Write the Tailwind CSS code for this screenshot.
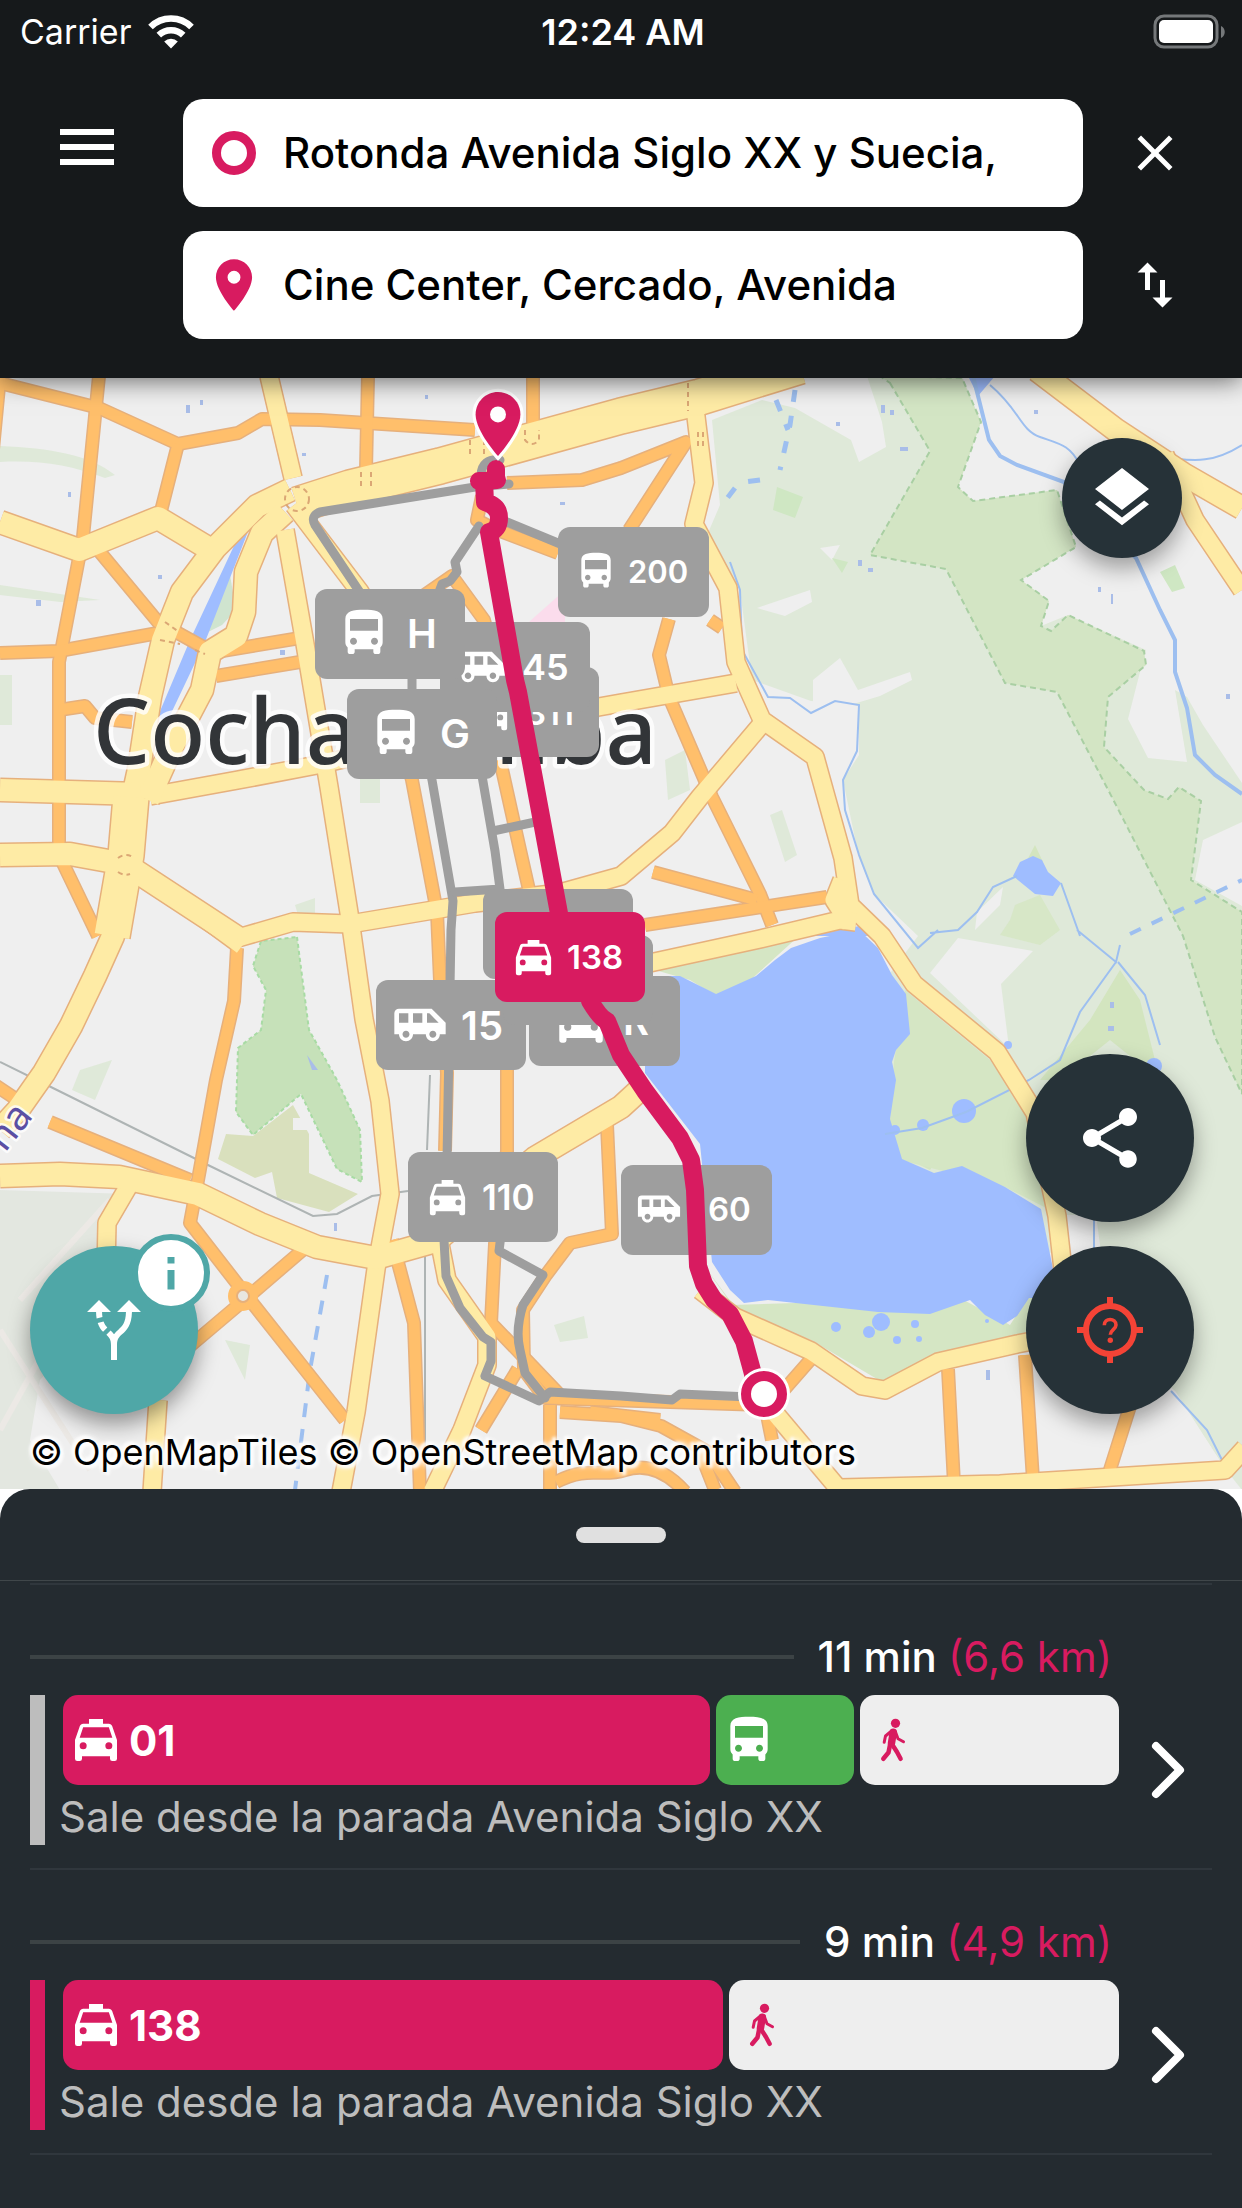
<!DOCTYPE html>
<html lang="es">
<head>
<meta charset="utf-8">
<meta name="viewport" content="width=device-width, initial-scale=1">
<title>Rutas</title>
<script src="https://cdn.jsdelivr.net/npm/@tailwindcss/browser@4"></script>
</head>
<body class="flex min-h-screen flex-col bg-white font-['Inter',sans-serif]">

<!-- Shared icons -->
<svg class="hidden" aria-hidden="true">
  <symbol id="bus" viewBox="0 0 24 24"><path d="M4 16c0 .88.39 1.67 1 2.22V20c0 .55.45 1 1 1h1c.55 0 1-.45 1-1v-1h8v1c0 .55.45 1 1 1h1c.55 0 1-.45 1-1v-1.78c.61-.55 1-1.34 1-2.22V6c0-3.5-3.58-4-8-4s-8 .5-8 4v10zm3.5 1c-.83 0-1.5-.67-1.5-1.5S6.670 14 7.500 14s1.500.67 1.500 1.500S8.330 17 7.500 17zm9 0c-.83 0-1.500-.67-1.500-1.500s.67-1.500 1.500-1.500 1.500.67 1.500 1.500-.67 1.500-1.500 1.500zm1.500-6H6V6h12v5z"/></symbol>
  <symbol id="taxi" viewBox="0 0 24 24"><path d="M5,11L6.5,6.5H17.5L19,11M17.5,16A1.5,1.5 0 0,1 16,14.5A1.5,1.5 0 0,1 17.5,13A1.5,1.5 0 0,1 19,14.5A1.5,1.5 0 0,1 17.5,16M6.5,16A1.5,1.5 0 0,1 5,14.5A1.5,1.5 0 0,1 6.5,13A1.5,1.5 0 0,1 8,14.5A1.5,1.5 0 0,1 6.5,16M18.92,6C18.72,5.42 18.16,5 17.5,5H15V3H9V5H6.5C5.84,5 5.28,5.42 5.08,6L3,12V20A1,1 0 0,0 4,21H5A1,1 0 0,0 6,20V19H18V20A1,1 0 0,0 19,21H20A1,1 0 0,0 21,20V12L18.92,6Z"/></symbol>
  <symbol id="van" viewBox="0 0 24 24"><path d="M17 5H3a2 2 0 00-2 2v9h2c0 1.650 1.340 3 3 3s3-1.350 3-3h5.500c0 1.650 1.340 3 3 3s3-1.350 3-3H23v-5l-6-6zM3 11V7h4v4H3zm3 6.500c-.83 0-1.500-.67-1.500-1.500s.67-1.500 1.500-1.500 1.500.67 1.500 1.500-.67 1.500-1.500 1.500zm7-6.500H9V7h4v4zm4.500 6.500c-.83 0-1.500-.67-1.500-1.500s.67-1.500 1.500-1.500 1.500.67 1.500 1.500-.67 1.500-1.500 1.500zM15 11V7h1l4 4h-5z"/></symbol>
  <symbol id="pin" viewBox="0 0 24 24"><path d="M12 2C8.130 2 5 5.130 5 9c0 5.250 7 13 7 13s7-7.750 7-13c0-3.870-3.130-7-7-7zm0 9.500a2.500 2.500 0 010-5 2.500 2.500 0 010 5z"/></symbol>
  <symbol id="walk" viewBox="0 0 56 56">
    <circle cx="30.500" cy="11.300" r="4.600"/>
    <g fill="none" stroke="currentColor" stroke-width="4.500" stroke-linecap="round" stroke-linejoin="round">
      <path d="M26.500 19 20.500 24l-1.300 6.300" stroke-width="3"/>
      <path d="M30.500 20 33 26.800l5.500 3" stroke-width="3"/>
      <path d="M28.300 20.200 26.500 31" stroke-width="7.500"/>
      <path d="M25.300 31.500 23.500 40.500 18.300 46.800"/>
      <path d="M27.500 33 32 40l3.600 6.800"/>
    </g>
  </symbol>
</svg>

<header class="relative z-10 bg-[#16191b] pb-[39px] text-white shadow-[0_2px_24px_rgba(0,0,0,0.6)]">
  <div class="grid h-[63px] grid-cols-3 items-center pr-4 pl-5 text-[34px] leading-none">
    <div class="flex items-center gap-4">
      <span>Carrier</span>
      <svg class="h-9 w-12" viewBox="0 0 48 36" fill="none" stroke="#fff" stroke-width="6.500" aria-label="Wi-Fi">
        <path d="M3.500 13a29 29 0 0 1 41 0"/><path d="M11.800 21.200a17.500 17.500 0 0 1 24.400 0"/><path d="M24 34.500l-6.800-6.900a9.700 9.700 0 0 1 13.600 0z" fill="#fff" stroke="none"/>
      </svg>
    </div>
    <span class="text-center text-[36px] font-semibold">12:24 AM</span>
    <svg class="h-9 w-[73px] justify-self-end" viewBox="0 0 73 36" aria-label="Batería">
      <rect x="2" y="2" width="62" height="31" rx="9" fill="none" stroke="#75787a" stroke-width="3"/>
      <rect x="6" y="6" width="54" height="23" rx="5" fill="#fff"/>
      <path d="M68 12c5 2 5 10 0 12z" fill="#75787a"/>
    </svg>
  </div>
  <form class="grid grid-cols-[183px_1fr_159px] items-center gap-y-6 pt-9">
    <button type="button" aria-label="Menú" class="mb-3 ml-[51px] size-[72px]">
      <svg viewBox="0 0 24 24" fill="#fff"><path d="M3 18h18v-2H3v2zm0-5h18v-2H3v2zm0-7v2h18V6H3z"/></svg>
    </button>
    <label class="flex h-[108px] items-center gap-[18px] rounded-[20px] bg-white pl-5">
      <svg class="size-[62px] shrink-0" viewBox="0 0 62 62" fill="none" stroke="#d81b60" stroke-width="9"><circle cx="31" cy="31" r="17.500"/></svg>
      <input type="text" aria-label="Origen" value="Rotonda Avenida Siglo XX y Suecia," class="min-w-0 flex-1 bg-transparent pb-0.5 text-[42px] font-medium text-black outline-none">
    </label>
    <button type="button" aria-label="Cerrar" class="ml-[42px] size-[60px]">
      <svg viewBox="0 0 24 24" fill="#fff"><path d="M19 6.410L17.590 5 12 10.590 6.410 5 5 6.410 10.590 12 5 17.590 6.410 19 12 13.410 17.590 19 19 17.590 13.410 12z"/></svg>
    </button>
    <label class="col-start-2 flex h-[108px] items-center gap-[18px] rounded-[20px] bg-white pl-5">
      <svg class="size-[62px] shrink-0" fill="#d81b60"><use href="#pin"/></svg>
      <input type="text" aria-label="Destino" value="Cine Center, Cercado, Avenida" class="min-w-0 flex-1 bg-transparent pb-0.5 text-[42px] font-medium text-black outline-none">
    </label>
    <button type="button" aria-label="Intercambiar" class="ml-[42px] size-[60px]">
      <svg viewBox="0 0 24 24" fill="#fff"><path d="M16 17.010V10h-2v7.010h-3L15 21l4-3.990h-3zM9 3L5 6.990h3V14h2V6.990h3L9 3z"/></svg>
    </button>
  </form>
</header>

<main class="relative min-h-[900px] flex-1 overflow-hidden bg-[#efefef]">
  <svg class="absolute inset-0 size-full" viewBox="0 378 1242 1111" preserveAspectRatio="xMidYMid slice" role="img" aria-label="Mapa de Cochabamba">
    <defs>
      <g id="y-wide">
        <path d="M297 505 350 488 440 466 621 416 700 397 800 366"/>
        <path d="M131 797 126 855 112 936"/>
      </g>
      <g id="y-mid">
        <path d="M290 490 257 506 215 548 182 592 163 640 150 697 139 769 130 810"/>
        <path d="M119 860 113 936 95 976 71 1026 44 1073 18 1110 0 1130"/>
        <path d="M285 512 262 533 246 572 244 612 236 636 210 652 202 690 170 751 148 800"/>
        <path d="M0 1176 60 1174 119 1177 198 1194 260 1224 317 1247 376 1258 436 1241 535 1158 621 1107 645 1085"/>
        <path d="M0 522 79 550 158 518 208 548"/>
        <path d="M0 790 140 794"/>
        <path d="M0 855 70 854 125 864 238 938"/>
        <path d="M1037 370 1116 430 1183 474 1242 508"/>
      </g>
      <g id="y-narrow">
        <path d="M269 376 293 478"/>
        <path d="M285 530 305 644 329 787 350 919 364 1019 380 1101 390 1194 376 1269 356 1412 341 1492"/>
        <path d="M294 505 360 592 400 660"/>
        <path d="M150 796 238 780 317 765 470 730 621 703 736 683"/>
        <path d="M238 938 293 922 350 924 475 903 560 893 621 876 672 833 700 797 760 726"/>
        <path d="M242 946 200 915"/>
        <path d="M694 400 704 483 694 524 728 588 736 662 762 720 815 757 843 858 850 905 882 936 914 984 997 1052 1035 1113 1057 1216 1063 1270"/>
        <path d="M645 964 760 939 840 920 856 922M842 880 834 900 850 925"/>
        <path d="M128 1187 107 1223 106 1270M158 1400 152 1492"/>
        <path d="M700 1290 735 1317 811 1351 862 1386 885 1390 938 1362 1017 1344 1080 1332 1150 1315"/>
        <path d="M764 1400 843 1494"/>
        <path d="M840 1488 1000 1484 1225 1470 1245 1448"/>
        <path d="M440 1244 447 1280 487 1337 487 1365 462 1430 432 1492"/>
        <path d="M1165 455 1195 520 1242 590"/>
      </g>
      <g id="o-main">
        <path d="M0 383 99 408 178 444 238 433 262 419 320 420 475 430"/>
        <path d="M99 376 83 537 59 662 59 855 98 936"/>
        <path d="M178 444 160 515M0 376-10 480"/>
        <path d="M368 376 366 470M533 376V425"/>
        <path d="M99 551 158 622 205 648"/>
        <path d="M0 653 59 651 158 633"/>
        <path d="M222 651 300 638M216 676 300 662"/>
        <path d="M507 483 582 480 621 468 686 442 629 530"/>
        <path d="M400 612 452 576 484 620 500 680"/>
        <path d="M482 496 477 520 492 528 558 553"/>
        <path d="M390 700 412 780 437 912 440 980 447 1073 445 1151"/>
        <path d="M500 760 520 850 534 912 507 1000 507 1151 495 1244 491 1323 560 1395"/>
        <path d="M237 948 234 1001 216 1080 198 1180 190 1223 242 1290 345 1420"/>
        <path d="M305 1248 242 1302 190 1346"/>
        <path d="M392 1240 414 1323 420 1492"/>
        <path d="M50 1122 190 1180M-5 1085 25 1105"/>
        <path d="M607 1125 612 1234 570 1243 546 1275 523 1310 524 1370 545 1398 764 1405"/>
        <path d="M518 1369 481 1430M550 1405V1492"/>
        <path d="M669 619 659 655 669 697 712 797 760 894 772 925"/>
        <path d="M653 872 757 900M645 925 827 897"/>
        <path d="M948 1369 954 1484M1025 1355 1033 1480M1132 1400 1108 1476M811 1359 783 1391M766 1410 772 1440"/>
        <path d="M560 1412 621 1416 661 1426 708 1452 735 1492M590 1412 660 1420M700 1452 715 1490"/>
        <path d="M710 620 722 628M556 1482C590 1465 600 1478 625 1470 650 1462 670 1475 685 1492"/>
        <path d="M59 710 85 706 95 718 132 722"/>
      </g>
    </defs>

    <rect y="378" width="1242" height="1111" fill="#efefef"/>

    <!-- Parks and woods -->
    <g fill="#dfe9d9">
      <path d="M712 420 762 400 795 408 851 440 859 462 886 447 882 422 867 376H1242V1490L1223 1466 1175 1391 1096 1320V1234L1033 1260 870 1200V1000L918 936 874 894 859 858 843 780 859 755V705L811 701 752 680 740 590 708 533 720 505Z"/>
      <path d="M0 446C50 448 90 455 115 475L105 478C70 465 40 460 0 462ZM0 585 100 600 60 602 0 595ZM0 675H12V725H0ZM360 775H380V803H360ZM295 905 315 898V915H298ZM80 1070 112 1060 95 1100 72 1090ZM665 760 685 750 690 790 668 800ZM770 815 782 810 797 855 785 862ZM554 1325 584 1316 588 1338 560 1342ZM225 1340 250 1345 245 1380Z"/>
    </g>
    <path d="M0 1190 130 1194 100 1260V1310L40 1380 30 1440 60 1490H0Z" fill="#e3e7e0"/>
    <path d="M0 1430 100 1250M20 1300 110 1200M0 1330 90 1470" fill="none" stroke="#ece9e5" stroke-width="6"/>
    <g fill="#efefef">
      <path d="M962 376 981 422 958 487 973 501 1057 490 1076 547 1021 580 1049 601 1041 626 1068 615 1146 650 1140 672 1128 719 1148 758 1187 762 1175 690 1187 697 1203 725 1242 783V376Z"/>
      <path d="M1242 822 1203 840 1195 880 1242 906ZM757 608 810 590 812 602 785 616ZM813 680 840 658 858 690 910 672 912 680 880 696 850 705 813 702Z"/>
      <path d="M958 938 930 973 1009 1048 1001 984 1033 951ZM1096 1215 1060 1215V1320L1110 1320ZM977 912 1003 887 1000 905 975 930ZM1060 1320 1175 1391 1222 1464 1040 1480V1340Z"/>
      <path d="M820 548 840 545 832 560Z"/>
    </g>
    <g fill="#cfe7c3"><path d="M777 487 803 497 795 518 773 510ZM832 558 848 562 842 573ZM1160 572 1175 565 1185 588 1172 592Z"/></g>
    <path d="M890 383 930 451 870 555 946 569 1005 683 1057 692 1116 805 1183 936 1215 1037 1242 1094V912L1191 880 1201 801 1179 787 1168 799 1144 790 1104 747 1108 697 1146 665 1144 651 1068 615 1051 631 1041 626 1049 601 1021 580 1076 547 1057 490 973 501 958 487 981 422 962 378 880 376Z" fill="#d3e5c4" stroke="#a9cfa3" stroke-width="2" stroke-dasharray="6 4"/>
    <g fill="#d3e5bf">
      <path d="M1120 970 1140 1000 1160 1080 1110 1040 1060 1080 1040 1080 1090 1020Z"/>
      <path d="M1015 905 1040 895 1060 930 1040 945 1000 935 1010 920Z" opacity=".7"/>
      <path d="M895 1060 915 1030 990 1070 970 1110 930 1170 890 1150ZM1035 845 1043 862 1024 866Z"/>
    </g>
    <g fill="#d5e6c4">
      <path d="M655 970 770 940 800 935 745 985 716 996 690 980Z"/>
      <path d="M700 1260 732 1305 960 1298 1010 1325 1033 1290V1340L938 1357 882 1382 811 1340 740 1314Z"/>
      <path d="M905 990 990 1060 1035 1120 1050 1210 1005 1187 900 1160 890 1120 894 1062Z"/>
    </g>
    <path d="M297 937 309 1030 337 1080 360 1130 362 1182 337 1169 301 1094 253 1135 236 1112 238 1048 261 1030 266 990 253 966 261 941Z" fill="#c6e1b9" stroke="#a8dba4" stroke-width="2" stroke-dasharray="4 3"/>
    <path d="M226 1134 253 1136 293 1105 309 1134V1173L358 1194 329 1212 277 1198 272 1172 255 1178 218 1159Z" fill="#d9e0bd"/>
    <path d="M293 1118H308V1130H293Z" fill="#efefef"/>
    <path d="M520 630 565 590V640Z" fill="#fbdcec"/>
    <path d="M230 575 236 610 222 625 208 632Z" fill="#cfe4cf"/>

    <!-- Water -->
    <g fill="#9fbdff">
      <path d="M645 976 680 976 716 994 756 976 775 960 791 948 820 938 859 930 878 948 892 975 906 994 910 1034 896 1050 892 1062 896 1080 890 1119 902 1159 934 1173 962 1166 1005 1187 1041 1209 1053 1269 1040 1298 1029 1298 1017 1316 1003 1325 985 1315 970 1300 930 1314 878 1312 768 1300 744 1303 730 1290 712 1262 700 1144 645 1073Z"/>
      <path d="M1013 876 1020 862 1033 856 1042 860 1048 872 1061 883 1053 896 1035 894Z"/>
      <circle cx="964" cy="1111" r="12"/><circle cx="923" cy="1125" r="6"/><circle cx="895" cy="1130" r="5"/>
      <circle cx="881" cy="1322" r="9"/><circle cx="869" cy="1332" r="6"/><circle cx="836" cy="1327" r="5"/><circle cx="897" cy="1340" r="4"/><circle cx="915" cy="1324" r="4"/><circle cx="919" cy="1339" r="3"/><circle cx="1154" cy="1066" r="8"/>
      <circle cx="987" cy="1321" r="2"/><circle cx="1008" cy="1045" r="4"/>
      <path d="M240 533 251 524 205 642 166 724 158 716 190 640ZM968 376H995L978 396ZM820 932 860 926 878 936H815Z"/>
    </g>
    <g fill="none" stroke="#9dbff0" stroke-width="2">
      <path d="M973 376 989 440 1000 456 1017 465 1064 482 1136 558 1160 610 1175 640V672L1187 708 1195 755 1215 775 1242 794" stroke-width="4"/>
      <path d="M990 385C1020 410 1020 430 1040 437S1070 445 1080 465M1242 445C1210 465 1190 460 1170 458"/>
      <path d="M730 562 740 590 742 650 768 697 790 698 811 713 835 701 859 705 857 751 843 780 845 810 859 855 874 894 918 948 938 930M930 933 958 930 977 912 993 887 1017 876M1061 883 1080 936M1077 930 1116 962 1120 945M1116 962 1080 1012 1060 1060 1029 1080 966 1112 922 1128 885 1134M1118 962 1145 995 1160 1045M1171 1391 1207 1430 1225 1466M1094 1220V1250"/>
      <path d="M795 390 790 425 780 470M760 480 745 482M735 488 722 505M776 400 788 430" stroke-dasharray="12 14" stroke-width="5"/>
      <path d="M1130 934 1242 880" stroke-dasharray="12 12" stroke-width="4"/>
      <path d="M327 1275 310 1370 295 1490" stroke-dasharray="14 12" stroke-width="4"/>
    </g>
    <g fill="#a9bde8"><path d="M186 405h4v8h-4zM200 400h3v5h-3zM425 395h3v4h-3zM302 453h4v3h-4zM68 492h3v5h-3zM560 502h5v3h-5zM36 600h5v6h-5zM158 575h4v4h-4zM280 650h5v5h-5zM881 405h4v8h-4zM890 410h4v5h-4zM900 447h8v4h-8zM858 560h4v6h-4zM868 568h5v4h-5zM1098 587h3v5h-3zM1111 594h2v10h-2zM1226 694h4v5h-4zM1110 1002h4v6h-4zM1108 1026h6v5h-6zM836 422h4v4h-4zM307 1055 318 1070 312 1070ZM334 1223h3v8h-3zM986 1370h4v10h-4zM1034 410h4v4h-4z"/></g>
    <path d="M0 1062 59 1091 210 1166 313 1216 337 1214 372 1196 408 1191M425 1240V1492M430 1075 427 1150" fill="none" stroke="#aeb4b4" stroke-width="2"/>

    <!-- Roads: casings first, then fills -->
    <g fill="none" stroke-linejoin="round">
      <g stroke="#e6b07c">
        <use href="#o-main" stroke-width="14"/>
        <use href="#y-narrow" stroke-width="20"/>
        <use href="#y-mid" stroke-width="25"/>
        <use href="#y-wide" stroke-width="38"/>
      </g>
      <use href="#o-main" stroke="#ffbf6b" stroke-width="11"/>
      <use href="#y-narrow" stroke="#feeba5" stroke-width="17"/>
      <use href="#y-mid" stroke="#feeba5" stroke-width="22"/>
      <use href="#y-wide" stroke="#feeba5" stroke-width="35"/>
      <circle cx="243" cy="1296" r="15" fill="#ffbf6b"/><circle cx="243" cy="1296" r="6" fill="#e8e6e0" stroke="#e6b07c" stroke-width="2"/>
      <g stroke="#dba775" stroke-width="2" stroke-dasharray="5 4">
        <circle cx="297" cy="499" r="12"/><path d="M470 440v16M484 440v14M525 430v10q7 8 14 0v-10M361 472v14M371 472v14M688 383v28M698 432v18M703 432v18M165 622l14 10M160 640l20 4M195 650l10 4M118 858q8-6 16 0M118 872q6 4 12 2"/>
      </g>
    </g>

    <g font-family="'Noto Sans',sans-serif" stroke="#fff" stroke-linejoin="round" stroke-opacity=".8" paint-order="stroke">
      <text x="93" y="764" font-size="90" font-weight="500" fill="#323538" stroke-width="9">Cochabamba</text>
      <text transform="translate(34 1116) rotate(-52)" text-anchor="end" font-size="40" fill="#5b4fa3" stroke-width="5">na</text>
    </g>

    <!-- Alternative routes -->
    <g fill="none" stroke="#9e9e9e" stroke-width="9" stroke-linecap="round" stroke-linejoin="round">
      <path d="M509 484 475 487 320 512Q310 516 315 525L365 600M500 460Q482 458 481 475"/>
      <path d="M479 526 455 562 457 572 450 581 442 584 436 600M507 522 570 548"/>
      <path d="M412 670V690M428 760 432 780 453 901 451 930 447 1160M444 1240 446 1276 460 1308 483 1337 491 1342V1361L485 1376 539 1401 550 1392 621 1396 672 1400 680 1394 750 1397"/>
      <path d="M481 770 495 851 500 889 455 892M493 831 540 821"/>
      <path d="M501 1235 499 1251 543 1275 523 1305Q515 1330 520 1350L525 1373 545 1398"/>
    </g>

    <!-- Line labels, back to front -->
    <g fill="#fff" font-weight="600">
      <rect x="558" y="527" width="151" height="90" rx="12" fill="#9e9e9e"/>
      <use href="#bus" x="574" y="549" width="44" height="44"/><text x="628" y="583" font-size="31">200</text>
      <rect x="449" y="667" width="150" height="90" rx="12" fill="#9e9e9e"/>
      <use href="#taxi" x="466" y="689" width="47" height="47"/><text x="525" y="725" font-size="33">311</text>
      <rect x="440" y="622" width="150" height="90" rx="12" fill="#9e9e9e"/>
      <use href="#van" x="455" y="641" width="52" height="52"/><text x="522" y="680" font-size="36">45</text>
      <rect x="315" y="589" width="150" height="90" rx="12" fill="#9e9e9e"/>
      <use href="#bus" x="336" y="605" width="56" height="56"/><text x="407" y="648" font-size="40">H</text>
      <rect x="347" y="689" width="150" height="90" rx="12" fill="#9e9e9e"/>
      <use href="#bus" x="368" y="705" width="56" height="56"/><text x="440" y="748" font-size="40">G</text>
      <rect x="529" y="976" width="151" height="90" rx="12" fill="#9e9e9e"/>
      <use href="#taxi" x="552" y="992" width="58" height="58"/><text x="623" y="1035" font-size="40">R</text>
      <rect x="376" y="980" width="150" height="90" rx="12" fill="#9e9e9e"/>
      <use href="#van" x="392" y="997" width="56" height="56"/><text x="461" y="1040" font-size="40">15</text>
      <rect x="483" y="889" width="150" height="90" rx="12" fill="#9e9e9e"/>
      <rect x="503" y="935" width="150" height="90" rx="12" fill="#9e9e9e"/>
      <rect x="408" y="1152" width="150" height="90" rx="12" fill="#9e9e9e"/>
      <use href="#taxi" x="424" y="1174" width="47" height="47"/><text x="482" y="1210" font-size="35">110</text>
      <rect x="621" y="1165" width="151" height="90" rx="12" fill="#9e9e9e"/>
      <use href="#van" x="636" y="1186" width="46" height="46"/><text x="708" y="1221" font-size="33">60</text>

      <!-- Selected route -->
      <g fill="none" stroke="#d81b60" stroke-width="18" stroke-linecap="round" stroke-linejoin="round">
        <path d="M496 469V480M497 480 479 481M484 481 485 502Q499 506 499 518T489 532L515 680 518 692 563 935M590 1001Q600 1018 607 1021L621 1055 645 1091 680 1138 691 1160 695 1190 698 1266 704 1284 714 1300 730 1314 744 1341 756 1385"/>
      </g>
      <rect x="495" y="912" width="150" height="90" rx="12" fill="#d81b60"/>
      <use href="#taxi" x="510" y="934" width="47" height="47"/><text x="567" y="969" font-size="33">138</text>
    </g>
    <circle cx="764" cy="1394" r="26" fill="#fff"/><circle cx="764" cy="1394" r="18" fill="#fff" stroke="#d81b60" stroke-width="10"/>
    <g transform="translate(459.600 385.600) scale(3.200)">
      <path d="M12 2C8.130 2 5 5.130 5 9c0 5.250 7 13 7 13s7-7.750 7-13c0-3.870-3.130-7-7-7z" fill="#d81b60" stroke="#fff" stroke-width="2" paint-order="stroke"/>
      <circle cx="12" cy="9" r="2.500" fill="#fff"/>
    </g>
  </svg>

  <!-- Floating controls -->
  <button type="button" aria-label="Capas" class="absolute top-[60px] right-[60px] grid size-[120px] place-items-center rounded-full bg-[#263238] shadow-[0_10px_22px_rgba(0,0,0,0.35)]">
    <svg class="size-[72px]" viewBox="0 0 24 24" fill="#fff"><path d="M11.990 18.540l-7.370-5.730L3 14.070l9 7 9-7-1.630-1.270-7.380 5.740zM12 16l7.360-5.730L21 9l-9-7-9 7 1.630 1.270L12 16z"/></svg>
  </button>
  <div class="absolute right-12 bottom-[75px] flex flex-col gap-6">
    <button type="button" aria-label="Compartir" class="grid size-[168px] place-items-center rounded-full bg-[#263238] shadow-[0_10px_22px_rgba(0,0,0,0.35)]">
      <svg class="size-[72px]" viewBox="0 0 24 24" fill="#fff"><path d="M18 16.080c-.76 0-1.440.3-1.960.77L8.910 12.700c.05-.23.09-.46.09-.7s-.04-.47-.09-.7l7.050-4.110c.54.5 1.250.81 2.040.81 1.660 0 3-1.340 3-3s-1.340-3-3-3-3 1.340-3 3c0 .24.04.47.09.7L8.040 9.810C7.500 9.310 6.790 9 6 9c-1.660 0-3 1.340-3 3s1.340 3 3 3c.79 0 1.500-.31 2.040-.81l7.120 4.160c-.05.21-.08.43-.08.65 0 1.610 1.310 2.920 2.920 2.920s2.920-1.310 2.920-2.920-1.310-2.920-2.920-2.920z"/></svg>
    </button>
    <button type="button" aria-label="Mi ubicación" class="grid size-[168px] place-items-center rounded-full bg-[#263238] shadow-[0_10px_22px_rgba(0,0,0,0.35)]">
      <svg class="size-[72px]" viewBox="0 0 24 24" fill="none" stroke="#f44336" stroke-width="2"><circle cx="12" cy="12" r="8"/><path d="M12 1v3.500M12 19.500V23M1 12h3.500M19.500 12H23"/><path d="M10.100 10.400c0-2.600 3.900-2.500 3.900-.1 0 1.500-1.900 1.700-1.900 3.300" stroke-width="1.200"/><circle cx="12.100" cy="15.400" r=".9" fill="#f44336" stroke="none"/></svg>
    </button>
  </div>
  <div class="absolute bottom-[75px] left-[30px]">
    <button type="button" aria-label="Rutas alternativas" class="grid size-[168px] place-items-center rounded-full bg-[#4fa7a7] shadow-[0_10px_22px_rgba(0,0,0,0.4)]">
      <svg class="size-[72px]" viewBox="0 0 24 24" fill="#fff"><path d="M9.780 11.160l-1.420 1.420c-.68-.69-1.340-1.580-1.790-2.940l1.940-.49c.32.89.77 1.500 1.270 2.010zM11 6L7 2 3 6h3.020c.02.81.08 1.540.19 2.170l1.940-.49C8.080 7.200 8.030 6.630 8.020 6H11zm10 0l-4-4-4 4h2.990c-.1 3.680-1.280 4.750-2.540 5.880-.5.44-1.010.92-1.450 1.550-.34-.49-.73-.88-1.130-1.240L9.460 13.600c.93.85 1.540 1.540 1.540 3.400v5h2v-5c0-2.020.71-2.660 1.790-3.630 1.380-1.240 3.080-2.780 3.200-7.370H21z"/></svg>
    </button>
    <button type="button" aria-label="Información" class="absolute -top-3 -right-3 size-[78px] rounded-full border-6 border-[#4fa7a7] bg-white">
      <svg viewBox="0 0 66 66" fill="#4fa7a7"><path d="M29.500 17h7v6.500h-7zM29.500 30h7v19.500h-7z"/></svg>
    </button>
  </div>
  <p class="absolute bottom-[13px] left-[30px] text-[36px] leading-12 whitespace-nowrap text-black [text-shadow:0_0_6px_#fff,0_0_6px_#fff,0_0_8px_#fff,3px_3px_3px_#fff,-3px_-3px_3px_#fff]">© <a href="#openmaptiles">OpenMapTiles</a> © <a href="#openstreetmap">OpenStreetMap contributors</a></p>
</main>

<section aria-label="Rutas" class="relative rounded-t-[30px] bg-[#242b30] pb-[53px]">
  <div class="flex h-[92px] items-center justify-center border-b border-[#40474a]">
    <div class="h-4 w-[90px] rounded-full bg-[#e0e0e0]"></div>
  </div>
  <ul class="px-[30px] pt-[2px] text-[42px]">
    <li class="border-y-2 border-[#30373d] pt-12 pb-[23px]">
      <div class="flex h-12 items-center gap-6 pr-[100px]">
        <div class="h-1 flex-1 bg-[#3c4345]"></div>
        <p class="leading-12 font-medium text-white">11 min <span class="font-normal text-[#d81b60]">(6,6 km)</span></p>
      </div>
      <div class="mt-[14px] flex">
        <div class="w-[15px] bg-[#bdbdbd]"></div>
        <div class="ml-[18px] flex-1">
          <div class="flex h-[90px] gap-[6px] font-bold text-white">
            <div class="flex flex-[647] items-center gap-[5px] rounded-[15px] bg-[#d81b60]"><svg class="ml-[5px] size-14" fill="#fff"><use href="#taxi"/></svg>01</div>
            <div class="flex flex-[138] items-center rounded-[15px] bg-[#4caf50]"><svg class="ml-[5px] size-14" fill="#fff"><use href="#bus"/></svg></div>
            <div class="flex flex-[259] items-center rounded-[15px] bg-[#eee]"><svg class="ml-[5px] size-14 text-[#d81b60]" fill="currentColor"><use href="#walk"/></svg></div>
          </div>
          <p class="-ml-1 pt-1 leading-14 text-[#bdbdbd]">Sale desde la parada Avenida Siglo XX</p>
        </div>
        <button type="button" aria-label="Ver ruta" class="flex w-[93px] items-center justify-center pl-1">
          <svg class="h-[60px] w-9" viewBox="0 0 36 60" fill="none" stroke="#fff" stroke-width="8" stroke-linecap="round" stroke-linejoin="round"><path d="M6 6l24 24L6 54"/></svg>
        </button>
      </div>
    </li>
    <li class="border-b-2 border-[#30373d] pt-12 pb-[23px]">
      <div class="flex h-12 items-center gap-6 pr-[100px]">
        <div class="h-1 flex-1 bg-[#3c4345]"></div>
        <p class="leading-12 font-medium text-white">9 min <span class="font-normal text-[#d81b60]">(4,9 km)</span></p>
      </div>
      <div class="mt-[14px] flex">
        <div class="w-[15px] bg-[#d81b60]"></div>
        <div class="ml-[18px] flex-1">
          <div class="flex h-[90px] gap-[6px] font-bold text-white">
            <div class="flex flex-[660] items-center gap-[5px] rounded-[15px] bg-[#d81b60]"><svg class="ml-[5px] size-14" fill="#fff"><use href="#taxi"/></svg>138</div>
            <div class="flex flex-[390] items-center rounded-[15px] bg-[#eee]"><svg class="ml-[5px] size-14 text-[#d81b60]" fill="currentColor"><use href="#walk"/></svg></div>
          </div>
          <p class="-ml-1 pt-1 leading-14 text-[#bdbdbd]">Sale desde la parada Avenida Siglo XX</p>
        </div>
        <button type="button" aria-label="Ver ruta" class="flex w-[93px] items-center justify-center pl-1">
          <svg class="h-[60px] w-9" viewBox="0 0 36 60" fill="none" stroke="#fff" stroke-width="8" stroke-linecap="round" stroke-linejoin="round"><path d="M6 6l24 24L6 54"/></svg>
        </button>
      </div>
    </li>
  </ul>
</section>
</body>
</html>
